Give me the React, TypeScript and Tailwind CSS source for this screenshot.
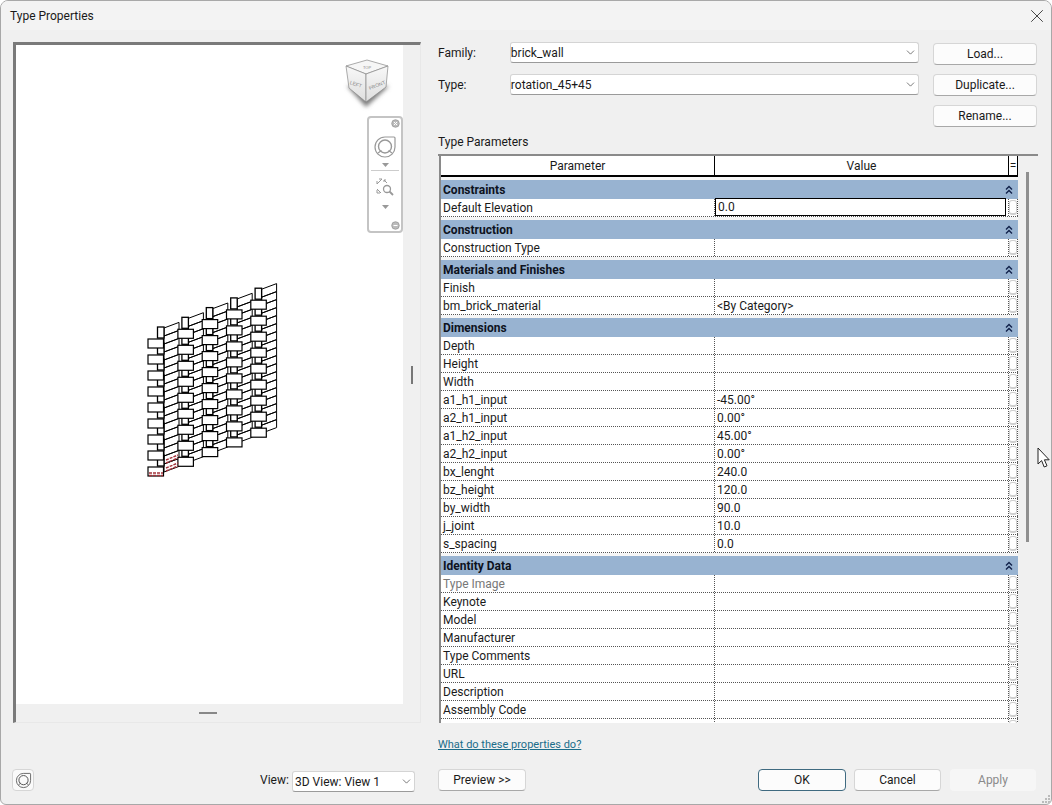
import { ChevronDown, X } from "lucide-react";

type Row = { n: string; v?: string; dim?: boolean; focus?: boolean };
type Section = { title: string; rows: Row[] };

const sections: Section[] = [
  { title: "Constraints", rows: [{ n: "Default Elevation", v: "0.0", focus: true }] },
  { title: "Construction", rows: [{ n: "Construction Type" }] },
  { title: "Materials and Finishes", rows: [{ n: "Finish" }, { n: "bm_brick_material", v: "<By Category>" }] },
  {
    title: "Dimensions",
    rows: [
      { n: "Depth" },
      { n: "Height" },
      { n: "Width" },
      { n: "a1_h1_input", v: "-45.00°" },
      { n: "a2_h1_input", v: "0.00°" },
      { n: "a1_h2_input", v: "45.00°" },
      { n: "a2_h2_input", v: "0.00°" },
      { n: "bx_lenght", v: "240.0" },
      { n: "bz_height", v: "120.0" },
      { n: "by_width", v: "90.0" },
      { n: "j_joint", v: "10.0" },
      { n: "s_spacing", v: "0.0" },
    ],
  },
  {
    title: "Identity Data",
    rows: [
      { n: "Type Image", dim: true },
      { n: "Keynote" },
      { n: "Model" },
      { n: "Manufacturer" },
      { n: "Type Comments" },
      { n: "URL" },
      { n: "Description" },
      { n: "Assembly Code" },
      { n: "Cost" },
    ],
  },
];

function Wheel({ size = 24, color = "#777" }: { size?: number; color?: string }) {
  return (
    <svg width={size} height={size} viewBox="0 0 24 24" fill="none" stroke={color}>
      <path d="M12 2h9a1 1 0 0 1 1 1v9a10 10 0 1 1-10-10z" strokeWidth="1.2" />
      <circle cx="12" cy="11.5" r="6.5" strokeWidth="1.4" />
      <path d="M5 18l3.5-2.5M19 18l-3.5-2.5" strokeWidth="1.2" />
    </svg>
  );
}

function Wall() {
  const cols = [0, 1, 2, 3, 4];
  const rows = [0, 1, 2, 3, 4, 5, 6, 7, 8];
  const courses = [0, 1, 2, 3, 4, 5, 6, 7, 8, 9, 10, 11, 12, 13, 14, 15, 16, 17];
  const slants: string[] = [];
  const narrows: { x: number; y: number }[] = [];
  const faces: { x: number; y: number }[] = [];
  cols.forEach((c) => {
    courses.forEach((k) => {
      const sx = 164 + 24.4 * c;
      const sy = 328 - 9.7 * c + 8 * k;
      slants.push(`M${sx} ${sy}L${sx + 15} ${sy - 5.6}L${sx + 15} ${sy + 2.4}L${sx} ${sy + 8}Z`);
    });
    rows.forEach((j) => {
      const y = -9.7 * c + 16 * j;
      narrows.push({ x: 157.5 + 24.4 * c, y: 327 + y });
      faces.push({ x: c === 0 ? 148 : 153.6 + 24.3 * c, y: 339 + y });
    });
  });
  return (
    <g>
      <path d={slants.join("")} fill="#fff" stroke="#000" strokeWidth="1" />
      {narrows.map((n, i) => (
        <rect key={i} x={n.x} y={n.y} width="6.5" height="11" fill="#fff" stroke="#000" strokeWidth="1.3" />
      ))}
      {faces.map((f, i) => (
        <rect key={i} x={f.x} y={f.y} width="15.5" height="9" fill="#fff" stroke="#000" strokeWidth="1.2" />
      ))}
      <path
        d="M149 473h14M149 475.5h14M166 468l12-5M166 471l12-5M166 463l12-5M166 460l12-5"
        stroke="#a3323a"
        strokeWidth="1.4"
        strokeDasharray="3 1"
        fill="none"
      />
    </g>
  );
}

function Cube() {
  return (
    <g>
      <defs>
        <filter id="cubeBlur" x="-30%" y="-60%" width="160%" height="220%">
          <feGaussianBlur stdDeviation="2" />
        </filter>
        <linearGradient id="cubeFace" x1="0" y1="0" x2="0" y2="1">
          <stop offset="0" stopColor="#f8f8f8" />
          <stop offset="1" stopColor="#dedede" />
        </linearGradient>
      </defs>
      <path d="M347 86L366 107L389 86Z" fill="#7c7c7c" filter="url(#cubeBlur)" />
      <path d="M346 66L367 60L388 66L366 74Z" fill="#f6f6f6" stroke="#888" strokeWidth="0.7" />
      <path d="M346 66L366 74L366 102L349 88Z" fill="url(#cubeFace)" stroke="#888" strokeWidth="0.7" />
      <path d="M388 66L366 74L366 102L386 87Z" fill="url(#cubeFace)" stroke="#888" strokeWidth="0.7" />
      <text x="367" y="68.5" fontSize="4" textAnchor="middle" fill="#888" fontFamily="Liberation Sans, sans-serif">TOP</text>
      <text x="356" y="86" fontSize="5" textAnchor="middle" fill="#888" fontFamily="Liberation Sans, sans-serif" transform="rotate(18 356 84)">LEFT</text>
      <text x="377" y="87" fontSize="5" textAnchor="middle" fill="#888" fontFamily="Liberation Sans, sans-serif" transform="rotate(-22 377 85)">FRONT</text>
    </g>
  );
}

function NavBar() {
  return (
    <div className="absolute left-[351px] top-[71px] flex h-[117px] w-[36px] flex-col items-center rounded-[4px] border-2 border-[#c4c4c4] bg-white">
      <svg className="absolute right-[1px] top-[1px]" width="9" height="9" viewBox="0 0 9 9">
        <circle cx="4.5" cy="4.5" r="3.8" fill="#bbb" stroke="#888" strokeWidth="0.6" />
        <path d="M3 3l3 3M6 3l-3 3" stroke="#fff" />
      </svg>
      <div className="mt-[17px]">
        <Wheel size={24} color="#999" />
      </div>
      <svg className="mt-[4px]" width="7" height="4" viewBox="0 0 7 4">
        <path d="M0 0h7L3.5 4z" fill="#999" />
      </svg>
      <div className="mt-[3px] h-px w-[28px] bg-[#ccc]" />
      <svg className="mt-[7px]" width="18" height="18" viewBox="0 0 18 18" fill="none" stroke="#999">
        <path d="M6 1L1 6M6 1H3M1 6V3M1 11l4 4M1 15v-3M1 15h3M8 2l3 3M8 2v2M8 2h2" strokeWidth="1" />
        <circle cx="11" cy="11" r="3.5" strokeWidth="1.3" />
        <path d="M13.5 13.5L17 17" strokeWidth="1.8" />
      </svg>
      <svg className="mt-[9px]" width="7" height="4" viewBox="0 0 7 4">
        <path d="M0 0h7L3.5 4z" fill="#999" />
      </svg>
      <svg className="absolute bottom-[1px] right-[1px]" width="9" height="9" viewBox="0 0 9 9">
        <circle cx="4.5" cy="4.5" r="3.8" fill="#bbb" stroke="#888" strokeWidth="0.6" />
        <path d="M2.5 4.5h4" stroke="#fff" />
      </svg>
    </div>
  );
}

function Select({ label, className }: { label: string; className: string }) {
  return (
    <div
      className={`flex items-center justify-between rounded-[3px] border border-[#d4d4d4] border-b-[#9a9a9a] bg-white pr-[1px] ${className}`}
    >
      <span className="pt-px">{label}</span>
      <ChevronDown size={13} strokeWidth={1.3} color="#444" />
    </div>
  );
}

function Btn({ label, className = "" }: { label: string; className?: string }) {
  return (
    <div
      className={`flex h-[22px] items-center justify-center rounded-[4px] border border-[#d6d6d6] border-b-[#a8a8a8] bg-[#fcfcfc] ${className}`}
    >
      {label}
    </div>
  );
}

function Collapse() {
  return (
    <svg width="8" height="10" viewBox="0 0 8 10" fill="none" stroke="#10204a" strokeWidth="1.4">
      <path d="M1 4.5L4 1.5L7 4.5M1 8.5L4 5.5L7 8.5" />
    </svg>
  );
}

function ParamRow({ row }: { row: Row }) {
  return (
    <div className="flex h-[18px] border-b border-dotted border-[#555] bg-white leading-[19px]">
      <div className={`w-[273px] shrink-0 pl-[2px] ${row.dim ? "text-[#777]" : ""}`}>{row.n}</div>
      <div className="w-[294px] shrink-0 border-l border-dotted border-[#555] pl-[2px]">
        {row.focus ? (
          <div className="-mt-px ml-[-2px] mr-[2px] h-[18px] border-[1.5px] border-black pl-[2px] leading-[16px]">{row.v}</div>
        ) : (
          row.v
        )}
      </div>
      <div className="flex flex-1 items-center justify-center border-x border-dotted border-[#555]">
        <div className="h-[15px] w-[8px] rounded-[3px] border border-b-2 border-[#cfcfcf] bg-white" />
      </div>
    </div>
  );
}

export default function App() {
  return (
    <div
      className="relative flex h-[805px] w-[1052px] flex-col overflow-hidden rounded-t-[8px] rounded-b-[6px] border border-[#a8a8a8] bg-[#f0f0f0] text-[12px] text-[#1a1a1a]"
      style={{ fontFamily: 'Roboto, "Liberation Sans", sans-serif' }}
    >
      <div className="flex h-[29px] shrink-0 items-center justify-between bg-[#f3f3f3] pl-[9px] pr-[3px]">
        <span>Type Properties</span>
        <X size={22} strokeWidth={0.9} color="#222" />
      </div>

      <div className="flex h-[683px] shrink-0 pl-[12px] pt-[12px]">
        <div className="flex h-[681px] w-[408px] shrink-0 flex-col border-b border-l-[3px] border-r border-t-[3px] border-[#e8e8e8] border-l-[#7a7a7a] border-t-[#7a7a7a]">
          <div className="flex h-[659px] shrink-0">
            <div className="relative h-[659px] w-[387px] shrink-0 bg-white">
              <svg className="block h-full w-full" viewBox="16 45 387 659">
                <Wall />
                <Cube />
              </svg>
              <NavBar />
            </div>
            <div className="flex flex-1 items-center justify-center">
              <div className="mb-[-1px] h-[18px] w-[2px] bg-[#777]" />
            </div>
          </div>
          <div className="flex flex-1 items-center justify-center pr-[20px]">
            <div className="h-[2px] w-[18px] bg-[#888]" />
          </div>
        </div>

        <div className="ml-[17px] flex w-[600px] shrink-0 flex-col">
          <div className="flex">
            <div className="flex w-[481px] flex-col gap-[11px]">
              <div className="flex h-[21px] items-center">
                <span className="w-[72px]">Family:</span>
                <Select label="brick_wall" className="h-[21px] w-[410px]" />
              </div>
              <div className="flex h-[21px] items-center">
                <span className="w-[72px]">Type:</span>
                <Select label="rotation_45+45" className="h-[21px] w-[410px]" />
              </div>
            </div>
            <div className="ml-[14px] mt-px flex w-[104px] flex-col gap-[9px]">
              <Btn label="Load..." />
              <Btn label="Duplicate..." />
              <Btn label="Rename..." />
            </div>
          </div>
          <div className="mt-[6px] h-[18px] leading-[18px]">Type Parameters</div>
          <div className="mt-[3px] flex h-[569px] w-[600px] border-t-2 border-[#8a8a8a]">
            <div className="ml-px flex h-[567px] w-[579px] flex-col overflow-hidden border-l-2 border-[#8a8a8a] bg-[#f6f6f6]">
              <div className="mb-[3px] flex h-[21px] shrink-0 border-b-2 border-black bg-white text-center leading-[21px]">
                <div className="w-[273px] shrink-0">Parameter</div>
                <div className="h-full w-[294px] shrink-0 border-l border-black">Value</div>
                <div className="h-full flex-1 border-x border-black">=</div>
              </div>
              {sections.map((s) => (
                <div key={s.title} className="mb-[3px] shrink-0">
                  <div className="flex h-[19px] items-center justify-between bg-[#98b3d1] pl-[2px] pr-[5px] font-bold text-[#0d1220]">
                    <span>{s.title}</span>
                    <Collapse />
                  </div>
                  {s.rows.map((r) => (
                    <ParamRow key={r.n} row={r} />
                  ))}
                </div>
              ))}
            </div>
            <div className="ml-[8px] mt-[16px] h-[370px] w-[3px] bg-[#8f8f8f]" />
          </div>
          <div className="h-px w-[600px] bg-[#fafafa]" />
        </div>
      </div>

      <div className="mt-[23px] h-[18px] shrink-0 pl-[437px] text-[11px] leading-[18px] text-[#1b6d8a] underline">
        What do these properties do?
      </div>

      <div className="mt-[15px] flex h-[22px] shrink-0 items-center pl-[11px]">
        <div className="flex h-[22px] w-[22px] items-center justify-center rounded-[4px] border border-[#d6d6d6] bg-[#fafafa]">
          <Wheel size={17} color="#555" />
        </div>
        <span className="ml-[226px] w-[28px]">View:</span>
        <Select label="3D View: View 1" className="ml-[4px] mt-[2px] h-[21px] w-[123px] pl-[2px]" />
        <Btn label="Preview >>" className="ml-[23px] w-[88px]" />
        <div className="ml-[232px] flex h-[22px] w-[88px] items-center justify-center rounded-[4px] border-[1.5px] border-[#3f6a80] bg-[#fcfcfc]">
          OK
        </div>
        <Btn label="Cancel" className="ml-[8px] w-[87px]" />
        <div className="ml-[9px] flex h-[22px] w-[86px] items-center justify-center rounded-[4px] bg-[#f6f6f6] text-[#8a8a8a]">
          Apply
        </div>
      </div>

      <svg className="absolute left-[1036px] top-[446px]" width="14" height="22" viewBox="0 0 14 22">
        <path d="M1 1V17L4.6 13.6L7.2 20L10 18.8L7.4 12.8H12.2Z" fill="#fff" stroke="#222" strokeWidth="1" />
      </svg>
      <div className="absolute bottom-[1px] right-[1px] grid grid-cols-3 gap-px">
        {[0, 1, 2, 3, 4, 5, 6, 7, 8].map((i) => (
          <div key={i} className={`h-[2px] w-[2px] ${[0, 1, 3].includes(i) ? "bg-transparent" : "bg-[#bbb]"}`} />
        ))}
      </div>
    </div>
  );
}
